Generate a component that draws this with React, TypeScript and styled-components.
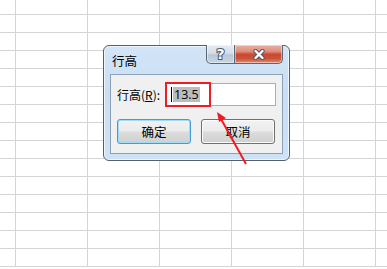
import React from "react";
import styled, { createGlobalStyle } from "styled-components";

const GlobalStyle = createGlobalStyle`
  html, body {
    margin: 0;
    padding: 0;
    background: #ffffff;
    overflow: hidden;
  }
  body {
    font-family: "Noto Sans CJK SC", "Liberation Sans", sans-serif;
  }
`;

const Page = styled.div`
  position: relative;
  width: 387px;
  height: 269px;
  overflow: hidden;
  background: #ffffff;
`;

const Sheet = styled.div`
  display: grid;
  grid-template-columns: 16px repeat(6, 72px);
  grid-template-rows: 15px repeat(14, 18px);
`;

const Cell = styled.div`
  box-sizing: border-box;
  border-right: 1px solid #d4d4d4;
  border-bottom: 1px solid #d4d4d4;
`;

const Dialog = styled.div`
  position: absolute;
  left: 103px;
  top: 45px;
  width: 187px;
  height: 116px;
  box-sizing: border-box;
  border: 1px solid #55606c;
  border-radius: 6px;
  background: linear-gradient(180deg, #d3e5f7 0%, #c9def4 40%, #cde2f6 100%);
  box-shadow: inset 0 0 0 1px #eef5fc;
  display: flex;
  flex-direction: column;
  padding: 0 6px 6px 6px;
`;

const TitleBar = styled.div`
  height: 28px;
  display: flex;
  align-items: flex-start;
  justify-content: space-between;
`;

const Title = styled.div`
  font-size: 12.5px;
  color: #000;
  padding: 7px 0 0 2px;
  line-height: 16px;
`;

const Caption = styled.div`
  display: flex;
  margin-top: -1px;
`;

const CaptionButton = styled.div<{ $close?: boolean }>`
  box-sizing: border-box;
  width: ${(p) => (p.$close ? "48px" : "29px")};
  height: 19px;
  border: 1px solid #5b6775;
  border-top: none;
  ${(p) =>
    p.$close
      ? `border-left: none; border-bottom-right-radius: 5px;`
      : `border-bottom-left-radius: 5px;`}
  background: ${(p) =>
    p.$close
      ? "linear-gradient(180deg, #eab0a3 0%, #de907c 35%, #c74a31 52%, #cb5238 75%, #e28c72 100%)"
      : "linear-gradient(180deg, #e4ebf3 0%, #d4dfea 45%, #b9c8d8 55%, #c8d6e3 100%)"};
  box-shadow: inset 0 0 0 1px rgba(255, 255, 255, 0.45);
  display: flex;
  align-items: center;
  justify-content: center;
`;

const HelpGlyph = styled.span`
  font-family: "DejaVu Sans", sans-serif;
  font-weight: bold;
  font-size: 14px;
  line-height: 14px;
  color: #ffffff;
  -webkit-text-stroke: 2px #4a5766;
  paint-order: stroke fill;
  margin-top: -1px;
`;

const Panel = styled.div`
  flex: 1;
  box-sizing: border-box;
  background: #f0f0f0;
  border: 1px solid #8da2b8;
  padding: 8px 6px 9px 6px;
  display: flex;
  flex-direction: column;
  justify-content: space-between;
`;

const FieldRow = styled.div`
  display: flex;
  align-items: center;
  justify-content: space-between;
`;

const Label = styled.div`
  font-size: 12px;
  color: #000;
  line-height: 16px;
  u {
    text-decoration: underline;
    text-underline-offset: 1px;
  }
`;

const InputBox = styled.div`
  position: relative;
  box-sizing: border-box;
  width: 111px;
  height: 23px;
  background: #ffffff;
  border: 1px solid #abadb3;
  display: flex;
  align-items: center;
  padding-left: 5px;
`;

const Caret = styled.span`
  width: 1px;
  height: 15px;
  background: #000;
  margin-right: 1px;
`;

const Selected = styled.span`
  background: #bcbcbc;
  font-family: "Open Sans", "Liberation Sans", sans-serif;
  font-size: 12.5px;
  line-height: 15px;
  padding: 0 1px;
  color: #000;
`;

const Highlight = styled.div`
  position: absolute;
  left: -1px;
  top: -2px;
  width: 46px;
  height: 25px;
  box-sizing: border-box;
  border: 2px solid #ee1c24;
`;

const ButtonRow = styled.div`
  display: flex;
  gap: 10px;
`;

const Button = styled.div<{ $default?: boolean }>`
  box-sizing: border-box;
  width: 74px;
  height: 25px;
  border-radius: 3px;
  border: 1px solid ${(p) => (p.$default ? "#3c9fd5" : "#707070")};
  background: linear-gradient(180deg, #f2f2f2 0%, #ebebeb 48%, #dddddd 52%, #cfcfcf 100%);
  box-shadow: inset 0 0 0 1px ${(p) => (p.$default ? "#9fdcf6" : "#fbfbfb")};
  display: flex;
  align-items: center;
  justify-content: center;
  font-size: 12.5px;
  color: #000;
`;

const Arrow = styled.svg`
  position: absolute;
  left: 0;
  top: 0;
  pointer-events: none;
`;

function CloseGlyph() {
  return (
    <svg width="14" height="11" viewBox="0 0 14 11">
      <path d="M3.5 2 L10.5 9 M10.5 2 L3.5 9" stroke="#4a5766" strokeWidth="4.2" strokeLinecap="round" />
      <path d="M3.5 2 L10.5 9 M10.5 2 L3.5 9" stroke="#ffffff" strokeWidth="2.4" strokeLinecap="round" />
    </svg>
  );
}

export default function App() {
  const cells = Array.from({ length: 7 * 15 });
  return (
    <>
      <GlobalStyle />
      <Page>
        <Sheet>
          {cells.map((_, i) => (
            <Cell key={i} />
          ))}
        </Sheet>
        <Dialog>
          <TitleBar>
            <Title>行高</Title>
            <Caption>
              <CaptionButton>
                <HelpGlyph>?</HelpGlyph>
              </CaptionButton>
              <CaptionButton $close>
                <CloseGlyph />
              </CaptionButton>
            </Caption>
          </TitleBar>
          <Panel>
            <FieldRow>
              <Label>
                行高(<u>R</u>):
              </Label>
              <InputBox>
                <Caret />
                <Selected>13.5</Selected>
                <Highlight />
              </InputBox>
            </FieldRow>
            <ButtonRow>
              <Button $default>确定</Button>
              <Button>取消</Button>
            </ButtonRow>
          </Panel>
        </Dialog>
        <Arrow width="387" height="269" viewBox="0 0 387 269">
          <line x1="246" y1="164" x2="221" y2="119" stroke="#ee1c24" strokeWidth="2" />
          <polygon points="217,112 226,118 219,122" fill="#ee1c24" />
        </Arrow>
      </Page>
    </>
  );
}
